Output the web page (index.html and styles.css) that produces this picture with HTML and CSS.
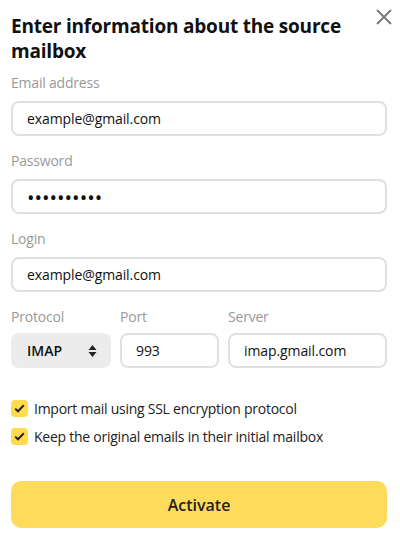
FILE: index.html
```html
<!DOCTYPE html>
<html lang="en">
<head>
<meta charset="utf-8">
<title>Source mailbox</title>
<link rel="stylesheet" href="styles.css">
</head>
<body>
<div class="dialog">
  <button class="close" aria-label="Close">
    <svg width="16" height="16" viewBox="0 0 16 16"><path d="M1 1L15 15M15 1L1 15" stroke="#7a7a7a" stroke-width="2" fill="none"/></svg>
  </button>
  <h1 class="title">Enter information about the source mailbox</h1>

  <div class="field">
    <label class="label">Email address</label>
    <div class="input">example@gmail.com</div>
  </div>
  <div class="field">
    <label class="label">Password</label>
    <div class="input dots">••••••••••</div>
  </div>
  <div class="field">
    <label class="label">Login</label>
    <div class="input">example@gmail.com</div>
  </div>

  <div class="row">
    <div class="col col-proto">
      <label class="label">Protocol</label>
      <div class="select">
        <span class="select-text">IMAP</span>
        <svg width="9" height="14" viewBox="0 0 9 14"><path d="M4.5 1L8.5 6H0.5Z M4.5 13L8.5 8H0.5Z" fill="#222"/></svg>
      </div>
    </div>
    <div class="col col-port">
      <label class="label">Port</label>
      <div class="input">993</div>
    </div>
    <div class="col col-server">
      <label class="label">Server</label>
      <div class="input">imap.gmail.com</div>
    </div>
  </div>

  <div class="checks">
    <div class="check">
      <span class="box"><svg width="11" height="9" viewBox="0 0 11 9"><path d="M1.2 4.6L4 7.3L9.8 1.3" stroke="#222" stroke-width="2" fill="none"/></svg></span>
      <span>Import mail using SSL encryption protocol</span>
    </div>
    <div class="check">
      <span class="box"><svg width="11" height="9" viewBox="0 0 11 9"><path d="M1.2 4.6L4 7.3L9.8 1.3" stroke="#222" stroke-width="2" fill="none"/></svg></span>
      <span>Keep the original emails in their initial mailbox</span>
    </div>
  </div>

  <button class="activate">Activate</button>
</div>
</body>
</html>
```
FILE: styles.css
```css
* { box-sizing: border-box; }
html, body { margin: 0; padding: 0; background: #fff; }
body {
  font-family: "Open Sans", "Noto Sans", sans-serif;
  color: #000;
}
.dialog {
  position: relative;
  width: 400px;
  padding: 14px 13px 0 11px;
}
.close {
  position: absolute;
  top: 8px;
  right: 7px;
  width: 18px;
  height: 18px;
  padding: 1px;
  border: 0;
  background: none;
  display: flex;
  align-items: center;
  justify-content: center;
}
.title {
  margin: 0 0 10px;
  font-size: 19px;
  line-height: 25px;
  font-weight: 700;
  letter-spacing: -0.2px;
  color: #111;
}
.field {
  display: flex;
  flex-direction: column;
  gap: 9px;
  margin-bottom: 16px;
}
.label {
  font-size: 14px;
  line-height: 18px;
  color: #999;
  letter-spacing: -0.2px;
}
.input {
  height: 35px;
  border: 2px solid #e0e0e0;
  border-radius: 8px;
  padding: 0 14px;
  display: flex;
  align-items: center;
  font-size: 14px;
  letter-spacing: -0.1px;
  color: #111;
}
.dots {
  font-size: 20px;
  letter-spacing: 0;
  padding-top: 1px;
}
.row {
  display: flex;
  gap: 9px;
}
.col { display: flex; flex-direction: column; gap: 7px; }
.col-proto { width: 100px; }
.col-port { width: 99px; }
.col-server { width: 159px; }
.select {
  height: 35px;
  border-radius: 8px;
  background: #ececec;
  display: flex;
  align-items: center;
  justify-content: space-between;
  padding: 0 14px 0 16px;
  font-size: 14px;
  font-weight: 600;
  color: #111;
}
.checks {
  margin-top: 32px;
  display: flex;
  flex-direction: column;
  gap: 11px;
}
.check {
  display: flex;
  align-items: center;
  gap: 6px;
  font-size: 14px;
  line-height: 17px;
  letter-spacing: -0.25px;
  color: #222;
}
.box {
  width: 17px;
  height: 17px;
  border-radius: 4px;
  background: #ffdb4d;
  display: flex;
  align-items: center;
  justify-content: center;
  flex: none;
}
.activate {
  margin-top: 36px;
  width: 376px;
  height: 47px;
  border: 0;
  border-radius: 10px;
  background: #ffdb5c;
  font-family: "Open Sans", "Noto Sans", sans-serif;
  font-size: 16px;
  font-weight: 600;
  color: #222;
}
```
